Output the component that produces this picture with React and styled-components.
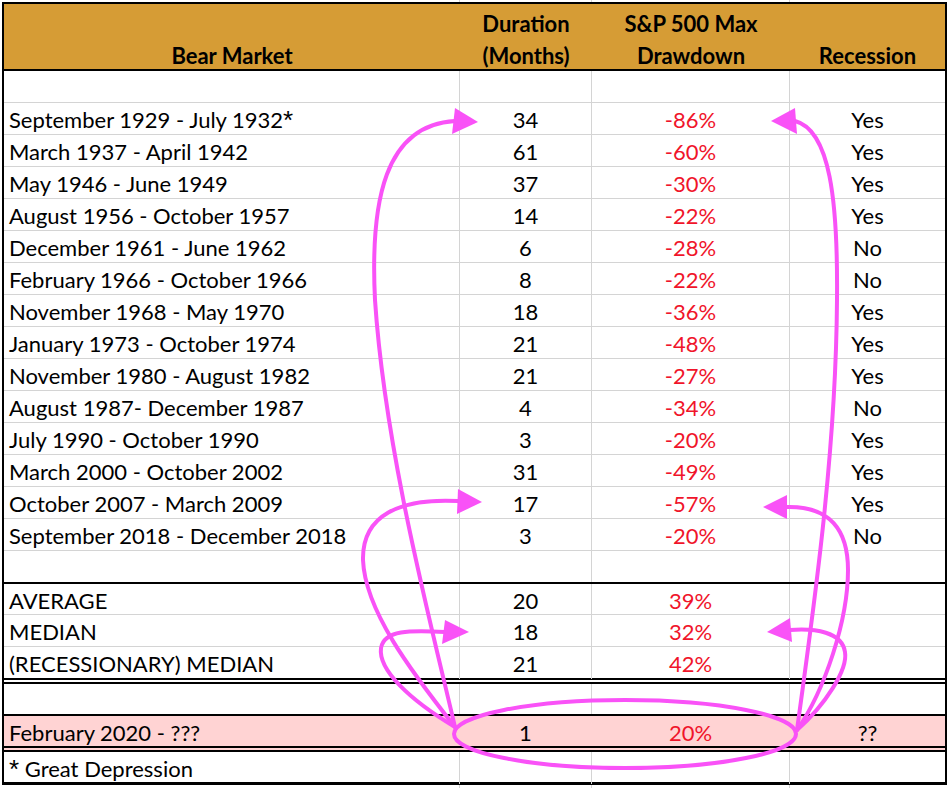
import React from 'react'
import styled, { createGlobalStyle } from 'styled-components'

const GlobalStyle = createGlobalStyle`
  html, body {
    margin: 0;
    padding: 0;
    background: #fff;
  }
  body {
    font-family: Lato, "Liberation Sans", sans-serif;
    color: #000;
  }
  *, *::before, *::after {
    box-sizing: border-box;
  }
`

const GRID = '#d4d4d4'
const MAGENTA = '#f952f7'

// the faint spreadsheet grid that peeks out above and below the framed table
const Page = styled.div`
  position: relative;
  width: 950px;
  height: 788px;
  overflow: hidden;
  background-image: linear-gradient(${GRID}, ${GRID}), linear-gradient(${GRID}, ${GRID}),
    linear-gradient(${GRID}, ${GRID});
  background-size: 1px 100%;
  background-repeat: no-repeat;
  background-position: 459px 0, 591px 0, 789px 0;
`

const Sheet = styled.div`
  margin: 2px 0 0 2px;
  width: 945px;
  background: #fff;
  border: 2px solid #000;
  border-bottom-width: 3px;
`

const Row = styled.div`
  display: grid;
  grid-template-columns: 456px 132px 198px 155px;
  height: ${(p) => p.$h}px;
  background: ${(p) => p.$fill || 'transparent'};
  border-bottom: ${(p) =>
    p.$edge === 'thick'
      ? '2px solid #000'
      : p.$edge === 'double'
        ? '6px double #000'
        : p.$edge === 'none'
          ? '0'
          : `1px solid ${GRID}`};
`

const HeaderRow = styled(Row)`
  background: #d69c35;
  font-weight: 700;
`

const Cell = styled.div`
  padding: 2px 5px 0;
  font-size: 22px;
  line-height: 30px;
  white-space: nowrap;
  text-align: ${(p) => p.$align || 'center'};
  color: ${(p) => (p.$red ? '#f0142a' : '#000')};
  border-right: 1px solid ${(p) => (p.$plain ? 'transparent' : GRID)};
  &:last-child {
    border-right: 0;
  }
`

const HeadCell = styled.div`
  display: flex;
  flex-direction: column;
  justify-content: flex-end;
  align-items: center;
  margin-bottom: -3px;
  font-size: 22px;
  line-height: 32px;
`

const Star = styled.span`
  font-family: "Liberation Sans", sans-serif;
  font-size: 26px;
  line-height: 0;
  vertical-align: -1px;
`

const Overlay = styled.svg`
  position: absolute;
  left: 0;
  top: 0;
  pointer-events: none;
`

const markets = [
  { name: 'September 1929 - July 1932', months: '34', drawdown: '-86%', recession: 'Yes', star: true },
  { name: 'March 1937 - April 1942', months: '61', drawdown: '-60%', recession: 'Yes' },
  { name: 'May 1946 - June 1949', months: '37', drawdown: '-30%', recession: 'Yes' },
  { name: 'August 1956 - October 1957', months: '14', drawdown: '-22%', recession: 'Yes' },
  { name: 'December 1961 - June 1962', months: '6', drawdown: '-28%', recession: 'No' },
  { name: 'February 1966 - October 1966', months: '8', drawdown: '-22%', recession: 'No' },
  { name: 'November 1968 - May 1970', months: '18', drawdown: '-36%', recession: 'Yes' },
  { name: 'January 1973 - October 1974', months: '21', drawdown: '-48%', recession: 'Yes' },
  { name: 'November 1980 - August 1982', months: '21', drawdown: '-27%', recession: 'Yes' },
  { name: 'August 1987- December 1987', months: '4', drawdown: '-34%', recession: 'No' },
  { name: 'July 1990 - October 1990', months: '3', drawdown: '-20%', recession: 'Yes' },
  { name: 'March 2000 - October 2002', months: '31', drawdown: '-49%', recession: 'Yes' },
  { name: 'October 2007 - March 2009', months: '17', drawdown: '-57%', recession: 'Yes' },
  { name: 'September 2018 - December 2018', months: '3', drawdown: '-20%', recession: 'No' },
]

const summary = [
  { name: 'AVERAGE', months: '20', drawdown: '39%', h: 30, edge: 'grid' },
  { name: 'MEDIAN', months: '18', drawdown: '32%', h: 31, edge: 'grid' },
  { name: '(RECESSIONARY) MEDIAN', months: '21', drawdown: '42%', h: 31, edge: 'double' },
]

const edgeSize = { thick: 2, double: 6, none: 0, grid: 1 }

const DataRow = ({ item = {}, h = 31, edge = 'grid', fill }) => (
  <Row $h={h + edgeSize[edge]} $edge={edge} $fill={fill}>
    <Cell $align="left" $plain={!!fill}>
      {item.name}
      {item.star && <Star>*</Star>}
    </Cell>
    <Cell $plain={!!fill}>{item.months}</Cell>
    <Cell $red $plain={!!fill}>{item.drawdown}</Cell>
    <Cell $plain={!!fill}>{item.recession}</Cell>
  </Row>
)

const Arrowhead = ({ points }) => <polygon points={points} fill={MAGENTA} />

const Annotations = () => (
  <Overlay width="950" height="788" viewBox="0 0 950 788">
    <g fill="none" stroke={MAGENTA} strokeWidth="4" strokeLinecap="round">
      <ellipse cx="625" cy="734" rx="171" ry="34" />
      <path d="M455,727 C430,620 385,450 375,300 C370,200 385,125 455,121" />
      <path d="M455,727 C410,670 365,610 363,560 C362,515 400,498 458,501" />
      <path d="M455,727 C410,700 378,670 381,648 C384,630 410,630 445,632" />
      <path d="M797,730 C815,600 836,450 837,300 C838,200 830,130 795,121" />
      <path d="M797,730 C825,690 848,620 848,570 C848,530 830,506 787,507" />
      <path d="M797,730 C825,705 848,670 845,652 C842,632 815,628 790,630" />
    </g>
    <Arrowhead points="455,108 478,122 452,134" />
    <Arrowhead points="458,489 482,502 457,514" />
    <Arrowhead points="445,620 469,632 442,644" />
    <Arrowhead points="795,108 771,121 797,134" />
    <Arrowhead points="787,495 763,507 787,519" />
    <Arrowhead points="790,618 767,632 792,642" />
  </Overlay>
)

export default function App() {
  return (
    <Page>
      <GlobalStyle />
      <Sheet>
        <HeaderRow $h={67} $edge="thick">
          <HeadCell>
            <span>Bear Market</span>
          </HeadCell>
          <HeadCell>
            <span>Duration</span>
            <span>(Months)</span>
          </HeadCell>
          <HeadCell>
            <span>S&amp;P 500 Max</span>
            <span>Drawdown</span>
          </HeadCell>
          <HeadCell>
            <span>Recession</span>
          </HeadCell>
        </HeaderRow>
        <DataRow />
        {markets.map((m) => (
          <DataRow key={m.name} item={m} />
        ))}
        <DataRow edge="thick" />
        {summary.map((s) => (
          <DataRow key={s.name} item={s} h={s.h} edge={s.edge} />
        ))}
        <DataRow h={30} edge="thick" />
        <DataRow
          item={{ name: 'February 2020 - ???', months: '1', drawdown: '20%', recession: '??' }}
          h={30}
          edge="double"
          fill="#ffd3d3"
        />
        <Row $h={30} $edge="none">
          <Cell $align="left">
            <Star>*</Star> Great Depression
          </Cell>
          <Cell />
          <Cell />
          <Cell />
        </Row>
      </Sheet>
      <Annotations />
    </Page>
  )
}
